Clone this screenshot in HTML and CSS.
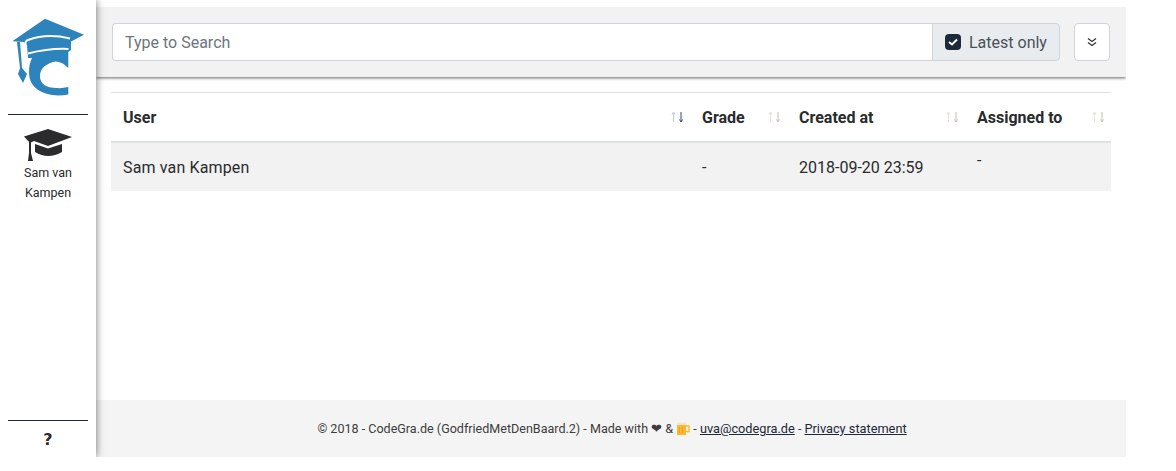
FILE: index.html
```html
<!DOCTYPE html>
<html lang="en">
<head>
    <meta charset="UTF-8">
    <title>CodeGrade</title>
    <link rel="stylesheet" href="styles.css">
</head>
<body>
    <div class="page">
        <nav class="sidebar">
            <a class="logo" href="#">
                <svg width="80" height="90" viewBox="8 12 80 90">
                    <path class="logo-blue" d="M45 18.7L84 34.7L71 41.5L71 50L68.3 52L68.3 68Q60 60 53 62Q40 66 40 76Q40 88 57 88Q62 88.5 68.3 87L68.3 94.5Q60 96 52 95Q29 91 29 72Q29 64 32 58L28 58L27 45L24 42L12.3 41.3Z"/>
                    <path class="logo-blue" d="M17 42L20 42L22 68L27 74L23 83L18 74L20 68Z"/>
                    <path class="logo-white" d="M25.5 45Q25 41 28 40Q47 33 70 38.5"/>
                    <path class="logo-white" d="M28 53.5Q50 48 68.5 49"/>
                </svg>
            </a>
            <hr class="nav-line">
            <a class="user-link" href="#">
                <svg width="48" height="32" viewBox="0 0 48 32">
                    <path class="cap-dark" d="M24 0L48 8L24 17L10 12L6 14L0 7.5Z"/>
                    <path class="cap-dark" d="M11 15L24 19.5L38 15V23Q24 31 11 23Z"/>
                    <path class="cap-dark" d="M5 13H7V24L9 32H4L5 24Z"/>
                </svg>
                <span class="user-name">Sam van Kampen</span>
            </a>
            <div class="sidebar-bottom">
                <hr class="nav-line">
                <a class="help" href="#">?</a>
            </div>
        </nav>

        <main class="content">
            <div class="toolbar">
                <div class="search-group">
                    <input class="search-input" type="text" placeholder="Type to Search">
                    <label class="latest">
                        <span class="check-box">
                            <svg width="10" height="8" viewBox="0 0 10 8"><path d="M1 4L4 6.5L9 1.5" fill="none" stroke="#fff" stroke-width="2"/></svg>
                        </span>
                        Latest only
                    </label>
                </div>
                <button class="expand-btn">
                    <svg width="10" height="10" viewBox="0 0 10 10"><path d="M1 1.5L5 4.5L9 1.5M1 5.5L5 8.5L9 5.5" fill="none" stroke="#333" stroke-width="1.2"/></svg>
                </button>
            </div>

            <div class="table-wrap">
                <table class="subs">
                    <thead>
                        <tr>
                            <th class="col-user">User
                                <svg class="sort active" width="16" height="12" viewBox="0 0 16 12"><path class="up" d="M3.5 11V1.5M2 3.5L3.5 1L5 3.5"/><path class="down" d="M11 1V10.5M9.5 8.5L11 11L12.5 8.5"/></svg>
                            </th>
                            <th class="col-grade">Grade
                                <svg class="sort" width="16" height="12" viewBox="0 0 16 12"><path class="up" d="M3.5 11V1.5M2 3.5L3.5 1L5 3.5"/><path class="down" d="M11 1V10.5M9.5 8.5L11 11L12.5 8.5"/></svg>
                            </th>
                            <th class="col-created">Created at
                                <svg class="sort" width="16" height="12" viewBox="0 0 16 12"><path class="up" d="M3.5 11V1.5M2 3.5L3.5 1L5 3.5"/><path class="down" d="M11 1V10.5M9.5 8.5L11 11L12.5 8.5"/></svg>
                            </th>
                            <th class="col-assigned">Assigned to
                                <svg class="sort" width="16" height="12" viewBox="0 0 16 12"><path class="up" d="M3.5 11V1.5M2 3.5L3.5 1L5 3.5"/><path class="down" d="M11 1V10.5M9.5 8.5L11 11L12.5 8.5"/></svg>
                            </th>
                        </tr>
                    </thead>
                    <tbody>
                        <tr>
                            <td class="name">Sam van Kampen</td>
                            <td>-</td>
                            <td>2018-09-20 23:59</td>
                            <td class="assigned">-</td>
                        </tr>
                    </tbody>
                </table>
            </div>

            <footer class="footer">
                © 2018 - CodeGra.de (GodfriedMetDenBaard.2) - Made with ❤ &amp;
                <svg class="beer" width="14" height="13" viewBox="0 0 14 13">
                    <path d="M1 3H10V13H1Z" fill="#fbb72e"/>
                    <path d="M1 0.5H10V3H1Z" fill="#efe6d2"/>
                    <path d="M10 4H13V9.5H10" fill="none" stroke="#fbb72e" stroke-width="1.3"/>
                    <path d="M3.5 5V11M6.5 5V11" stroke="#e89f1c" stroke-width="0.8"/>
                </svg>
                - <a href="#">uva@codegra.de</a> - <a href="#">Privacy statement</a>
            </footer>
        </main>
    </div>
</body>
</html>
```

FILE: styles.css
```css
* {
    box-sizing: border-box;
}
body {
    margin: 0;
    background-color: #fff;
    font-family: Roboto, "Liberation Sans", sans-serif;
    font-size: 16px;
    color: #292b2c;
}
.page {
    display: flex;
    width: 1126px;
    height: 457px;
}
.sidebar {
    position: relative;
    z-index: 2;
    flex: 0 0 96px;
    display: flex;
    flex-direction: column;
    align-items: center;
    background-color: #fff;
    box-shadow: 0 0 8px rgba(0,0,0,0.55);
    clip-path: inset(0 -20px 0 0);
}
.logo {
    display: block;
    height: 114px;
    padding-top: 12px;
}
.logo svg {
    display: block;
}
.logo-blue {
    fill: #2d83bc;
}
.logo-white {
    fill: none;
    stroke: #fff;
    stroke-width: 2;
}
.nav-line {
    width: 80px;
    margin: 0;
    border: 0;
    border-top: 1px solid #1d2838;
}
.user-link {
    display: flex;
    flex-direction: column;
    align-items: center;
    margin-top: 14px;
    color: inherit;
    text-decoration: none;
}
.cap-dark {
    fill: #2b2b2d;
}
.user-name {
    width: 70px;
    margin-top: 2px;
    font-size: 12.5px;
    line-height: 20px;
    text-align: center;
}
.sidebar-bottom {
    margin-top: auto;
    height: 37px;
    text-align: center;
}
.help {
    display: block;
    margin-top: 10px;
    font-family: "DejaVu Sans", sans-serif;
    font-size: 16px;
    font-weight: bold;
    line-height: 18px;
    color: #2b2b2d;
    text-decoration: none;
}
.content {
    flex: 1;
    display: flex;
    flex-direction: column;
    padding-top: 7px;
}
.toolbar {
    display: flex;
    align-items: center;
    height: 70px;
    padding: 0 16px;
    background-color: #f2f2f2;
    box-shadow: 0 1px 3px rgba(0,0,0,0.6);
    clip-path: inset(0 0 -6px 0);
}
.search-group {
    flex: 1;
    display: flex;
    height: 38px;
}
.search-input {
    flex: 1;
    min-width: 0;
    padding: 6px 12px;
    border: 1px solid #ced4da;
    border-right: 0;
    border-radius: 4px 0 0 4px;
    background-color: #fff;
    font-family: inherit;
    font-size: 16px;
}
.search-input::placeholder {
    color: #6c757d;
    opacity: 1;
}
.latest {
    display: flex;
    align-items: center;
    gap: 8px;
    width: 128px;
    padding-left: 12px;
    border: 1px solid #ced4da;
    border-radius: 0 4px 4px 0;
    background-color: #e9ecef;
    color: #495057;
}
.check-box {
    display: flex;
    align-items: center;
    justify-content: center;
    width: 16px;
    height: 16px;
    border-radius: 4px;
    background-color: #1d2838;
}
.expand-btn {
    display: flex;
    align-items: center;
    justify-content: center;
    width: 36px;
    height: 38px;
    margin-left: 14px;
    border: 1px solid #ced4da;
    border-radius: 4px;
    background-color: #fff;
}
.table-wrap {
    flex: 1;
    padding: 15px 15px 0;
}
.subs {
    width: 1000px;
    table-layout: fixed;
    border-collapse: separate;
    border-spacing: 0;
}
.subs th {
    position: relative;
    height: 51px;
    padding: 0 12px;
    border-top: 1px solid #dee2e6;
    border-bottom: 2px solid #dee2e6;
    text-align: left;
    font-weight: bold;
}
.subs td {
    height: 48px;
    padding: 0 12px;
    background-color: #f2f2f2;
}
.subs td.name {
    letter-spacing: 0.14px;
}
.subs td.assigned {
    padding-bottom: 14px;
}
.col-user {
    width: 579px;
}
.col-grade {
    width: 97px;
}
.col-created {
    width: 178px;
}
.col-assigned {
    width: 146px;
}
.sort {
    position: absolute;
    right: 4px;
    top: 18px;
    fill: none;
    stroke-width: 1;
}
.sort .up {
    stroke: #e6e3da;
}
.sort .down {
    stroke: #c8c0ae;
}
.sort.active .up {
    stroke: #c3cce6;
}
.sort.active .down {
    stroke: #2b4a80;
}
.footer {
    height: 57px;
    padding: 20px 0 0 2px;
    background-color: #f4f4f4;
    font-size: 12.55px;
    line-height: 17px;
    text-align: center;
    color: #3d3d3d;
}
.footer a {
    font-size: 12.75px;
    color: #1d2838;
    text-decoration: underline;
}
.beer {
    vertical-align: -2px;
}
```
